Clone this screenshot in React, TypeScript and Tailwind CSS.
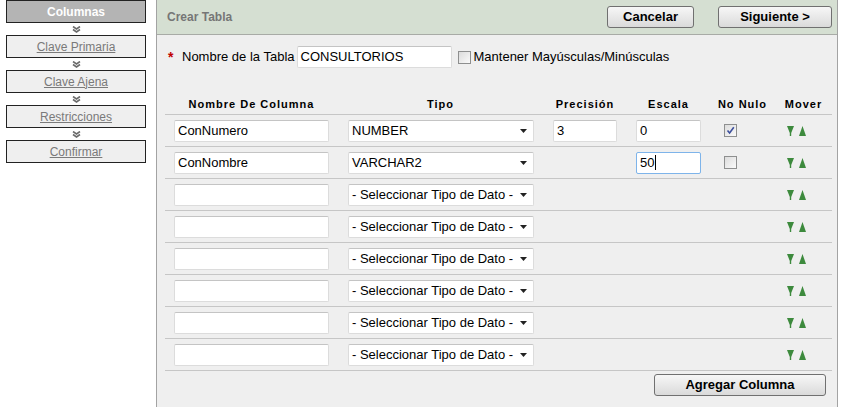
const font = "font-['Liberation_Sans',Arial,sans-serif]";

const steps = [
  { label: "Columnas", active: true },
  { label: "Clave Primaria" },
  { label: "Clave Ajena" },
  { label: "Restricciones" },
  { label: "Confirmar" },
];

type Row = {
  name: string;
  type: string;
  prec?: string;
  scale?: string;
  notNull?: boolean;
  focused?: boolean;
  filled?: boolean;
};

const rows: Row[] = [
  { name: "ConNumero", type: "NUMBER", prec: "3", scale: "0", notNull: true, filled: true },
  { name: "ConNombre", type: "VARCHAR2", scale: "50", notNull: false, focused: true, filled: true },
  { name: "", type: "- Seleccionar Tipo de Dato -" },
  { name: "", type: "- Seleccionar Tipo de Dato -" },
  { name: "", type: "- Seleccionar Tipo de Dato -" },
  { name: "", type: "- Seleccionar Tipo de Dato -" },
  { name: "", type: "- Seleccionar Tipo de Dato -" },
  { name: "", type: "- Seleccionar Tipo de Dato -" },
];

function Chevrons() {
  return (
    <svg width="9" height="7" viewBox="0 0 9 7" className="block">
      <path d="M1 0.5 L4.5 3 L8 0.5" fill="none" stroke="#6b6b6b" strokeWidth="1.6" />
      <path d="M1 3.5 L4.5 6 L8 3.5" fill="none" stroke="#6b6b6b" strokeWidth="1.6" />
    </svg>
  );
}

function TextBox({ value, width, focused }: { value: string; width: string; focused?: boolean }) {
  return (
    <div
      className={`${width} h-[22px] flex items-center pl-[3px] bg-white text-[13px] text-black border rounded-[2px] ${
        focused ? "border-[#7eb4ea]" : "border-[#dcdcdc] border-t-[#c4c4c4]"
      }`}
    >
      <span>{value}</span>
      {focused && <span className="ml-[1px] inline-block w-[1px] h-[15px] bg-black" />}
    </div>
  );
}

function SelectBox({ value }: { value: string }) {
  return (
    <div className="w-[186px] h-[22px] flex items-center justify-between pl-[3px] pr-[6px] bg-white text-[13px] text-black border border-[#dcdcdc] border-t-[#c4c4c4] rounded-[2px]">
      <span className="whitespace-nowrap">{value}</span>
      <svg width="7" height="4" viewBox="0 0 7 4">
        <polygon points="0,0 7,0 3.5,4" fill="#222" />
      </svg>
    </div>
  );
}

function CheckBox({ checked }: { checked?: boolean }) {
  return (
    <div className="w-[13px] h-[13px] border border-[#8e8f8f] bg-gradient-to-br from-[#dcdcdc] to-[#fafafa] flex items-center justify-center">
      {checked && (
        <svg width="9" height="9" viewBox="0 0 9 9">
          <path d="M1.5 4.5 L3.6 7 L7.8 1.2" fill="none" stroke="#3c4f9c" strokeWidth="1.6" />
        </svg>
      )}
    </div>
  );
}

function MoveArrows() {
  return (
    <div className="flex items-center gap-[5px]">
      <svg width="7" height="10" viewBox="0 0 7 10">
        <polygon points="0,0 7,0 4.2,7 4.2,10 2.8,10 2.8,7" fill="#3d8a3d" />
      </svg>
      <svg width="7" height="10" viewBox="0 0 7 10">
        <polygon points="3.5,0 7,10 0,10" fill="#3d8a3d" />
      </svg>
    </div>
  );
}

function Button({ children, width }: { children: React.ReactNode; width: string }) {
  return (
    <button className={`${width} h-[22px] rounded-[3px] border border-[#707070] bg-gradient-to-b from-[#f7f7f7] to-[#dadada] text-[13px] font-bold text-black`}>
      {children}
    </button>
  );
}

const cols = [
  { title: "Nombre De Columna", w: "w-[173px]" },
  { title: "Tipo", w: "w-[205px]" },
  { title: "Precisión", w: "w-[84px]" },
  { title: "Escala", w: "w-[83px]" },
  { title: "No Nulo", w: "w-[65px]" },
  { title: "Mover", w: "w-[57px]" },
];

export default function App() {
  return (
    <div className={`${font} w-[842px] h-[407px] flex bg-white overflow-hidden`}>
      {/* wizard steps */}
      <aside className="w-[156px] shrink-0 pl-[6px]">
        {steps.map((s, i) => (
          <div key={s.label}>
            {i > 0 && (
              <div className="h-[12px] w-[140px] flex items-center justify-center">
                <Chevrons />
              </div>
            )}
            <div
              className={`w-[140px] h-[23px] border border-[#222] flex items-center justify-center text-[12px] ${
                s.active ? "bg-[#b4b4b4] text-white font-bold" : "bg-[#efefef] text-[#7a7a7a] underline"
              }`}
            >
              {s.label}
            </div>
          </div>
        ))}
      </aside>

      {/* main panel */}
      <main className="w-[682px] shrink-0 flex flex-col bg-[#efefef] border-x border-[#a3a3a3]">
        <header className="h-[35px] shrink-0 flex items-center justify-between bg-[#d5dfd2] border-b border-[#a8aba6] pl-[10px] pr-[5px]">
          <span className="text-[12px] font-bold text-[#767676]">Crear Tabla</span>
          <div className="flex items-center gap-[24px]">
            <Button width="w-[87px]">Cancelar</Button>
            <Button width="w-[114px]">Siguiente &gt;</Button>
          </div>
        </header>

        <div className="pl-[11px] pt-[11px] flex items-center text-[13px] text-black">
          <span className="text-[#c00000] font-bold text-[14px] leading-none w-[14px]">*</span>
          <span className="mr-[2px]">Nombre de la Tabla</span>
          <TextBox value="CONSULTORIOS" width="w-[155px]" />
          <div className="ml-[6px] mr-[3px]">
            <CheckBox />
          </div>
          <span>Mantener Mayúsculas/Minúsculas</span>
        </div>

        <div className="ml-[8px] w-[667px] mt-[26px]">
          <div className="flex h-[20px] items-center">
            {cols.map((c) => (
              <div key={c.title} className={`${c.w} text-center text-[11px] font-bold tracking-[1px] text-black`}>
                {c.title}
              </div>
            ))}
          </div>

          {rows.map((r, i) => (
            <div key={i} className="flex h-[32px] items-center border-t border-[#c6c6c6]">
              <div className="w-[173px] pl-[9px]">
                <TextBox value={r.name} width="w-[155px]" />
              </div>
              <div className="w-[205px] pl-[10px]">
                <SelectBox value={r.type} />
              </div>
              <div className="w-[84px] pl-[10px]">
                {r.filled && r.prec !== undefined && <TextBox value={r.prec} width="w-[64px]" />}
              </div>
              <div className="w-[83px] pl-[9px]">
                {r.filled && <TextBox value={r.scale ?? ""} width="w-[65px]" focused={r.focused} />}
              </div>
              <div className="w-[65px] pl-[14px]">
                {r.filled && <CheckBox checked={r.notNull} />}
              </div>
              <div className="w-[57px] pl-[12px]">
                <MoveArrows />
              </div>
            </div>
          ))}

          <div className="border-t border-[#c6c6c6] flex justify-end pt-[3px] pr-[6px]">
            <Button width="w-[172px]">Agregar Columna</Button>
          </div>
        </div>
      </main>
    </div>
  );
}
